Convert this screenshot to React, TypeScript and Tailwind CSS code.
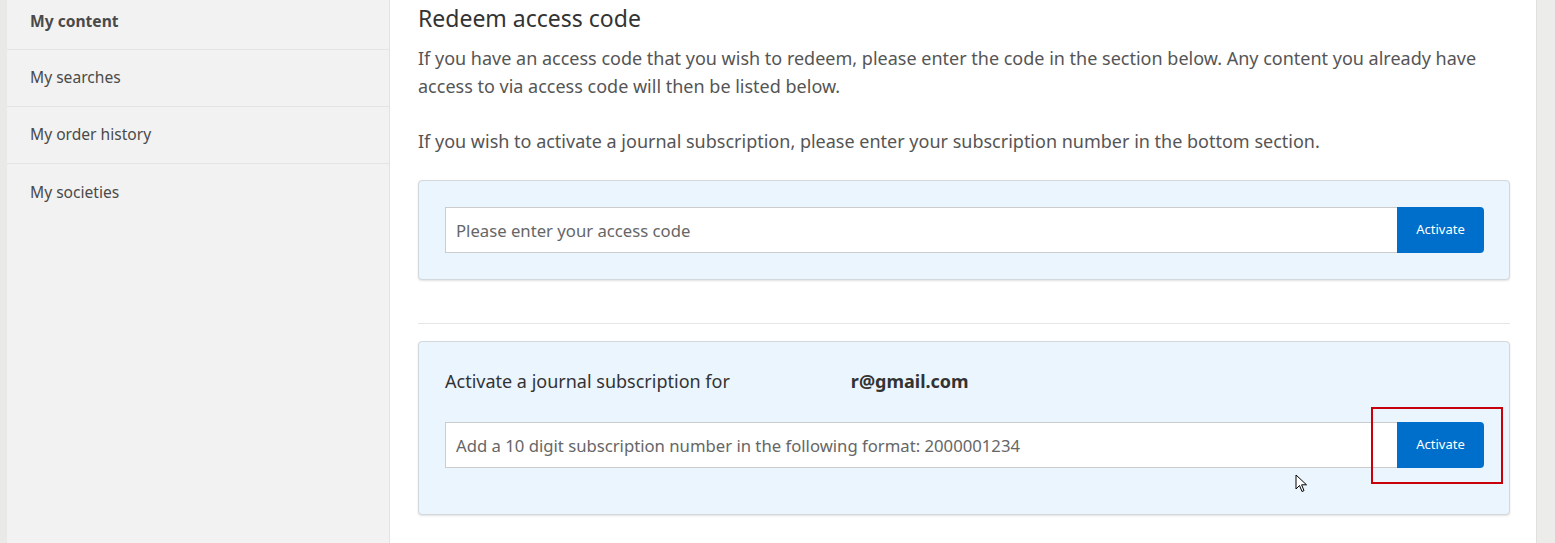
import React from 'react';

const navItems = ['My content', 'My searches', 'My order history', 'My societies'];

export default function App() {
  return (
    <div className="flex min-h-[543px] bg-[#ededed] font-['Noto_Sans',sans-serif]">
      {/* Left texture strip */}
      <div className="w-[7px] shrink-0 bg-[#e9e9e8]" />

      {/* Sidebar */}
      <aside className="w-[383px] shrink-0 bg-[#f2f2f2] border-r border-[#e2e2e2]">
        <div className="h-[50px] pb-[5px] px-[23px] flex items-center border-b border-[#e4e4e4] text-[15.6px] font-bold text-[#4a4a4a]">
          {navItems[0]}
        </div>
        {navItems.slice(1).map((item, i) => (
          <div
            key={item}
            className={`h-[57px] px-[23px] flex items-center text-[15.6px] text-[#4a4a4a] ${
              i < navItems.length - 2 ? 'border-b border-[#e4e4e4]' : ''
            }`}
          >
            {item}
          </div>
        ))}
      </aside>

      {/* Main */}
      <main className="w-[1146px] shrink-0 bg-white pl-[28px] pr-[26px] pt-[4px]">
        <h1 className="text-[23px] text-[#333] leading-[28px]">Redeem access code</h1>
        <p className="mt-[12px] text-[18px] leading-[28px] text-[#555]">
          If you have an access code that you wish to redeem, please enter the code in the section below. Any content you
          already have access to via access code will then be listed below.
        </p>
        <p className="mt-[27px] text-[18px] leading-[28px] text-[#555]">
          If you wish to activate a journal subscription, please enter your subscription number in the bottom section.
        </p>

        {/* Access code card */}
        <div className="mt-[25px] bg-[#ebf5fe] border border-[#d3d8dc] rounded-[4px] shadow-[0_1px_2px_rgba(0,0,0,0.12)] pl-[26px] pr-[25px] pt-[26px] pb-[26px]">
          <div className="flex h-[46px]">
            <input
              placeholder="Please enter your access code"
              className="flex-1 h-full bg-white border border-[#cccccc] border-r-0 px-[10px] text-[16.7px] text-[#555] placeholder:text-[#666] outline-none"
            />
            <button className="w-[87px] h-full bg-[#006fcb] text-white text-[13px] rounded-r-[4px]">Activate</button>
          </div>
        </div>

        <div className="mt-[43px] border-t border-[#e6e6e6]" />

        {/* Subscription card */}
        <div className="relative mt-[17px] bg-[#ebf5fe] border border-[#d3d8dc] rounded-[4px] shadow-[0_1px_2px_rgba(0,0,0,0.12)] pl-[26px] pr-[25px] pt-[27px] pb-[46px]">
          <p className="text-[18px] leading-[26px] text-[#333] -mt-[1px]">
            Activate a journal subscription for
            <span className="ml-[121px] font-bold">r@gmail.com</span>
          </p>
          <div className="mt-[28px] flex h-[46px]">
            <input
              placeholder="Add a 10 digit subscription number in the following format: 2000001234"
              className="flex-1 h-full bg-white border border-[#cccccc] border-r-0 px-[10px] text-[16.7px] text-[#555] placeholder:text-[#666] outline-none"
            />
            <button className="w-[87px] h-full bg-[#006fcb] text-white text-[13px] rounded-r-[4px]">Activate</button>
          </div>

          {/* Red highlight box */}
          <div className="absolute left-[952px] top-[65px] w-[132px] h-[77px] border-2 border-[#c8000a]" />

          {/* Mouse cursor */}
          <svg className="absolute left-[876px] top-[132px]" width="13" height="20" viewBox="0 0 13 20">
            <path d="M1 1 L1 15 L4.5 11.5 L7 17.5 L9 16.6 L6.6 10.8 L11.5 10.8 Z" fill="#fff" stroke="#000" strokeWidth="1" strokeLinejoin="round" />
          </svg>
        </div>
      </main>

      {/* Right texture strip */}
      <div className="flex-1 bg-[#ececeb] border-l border-[#e0e0e0]" />
    </div>
  );
}
